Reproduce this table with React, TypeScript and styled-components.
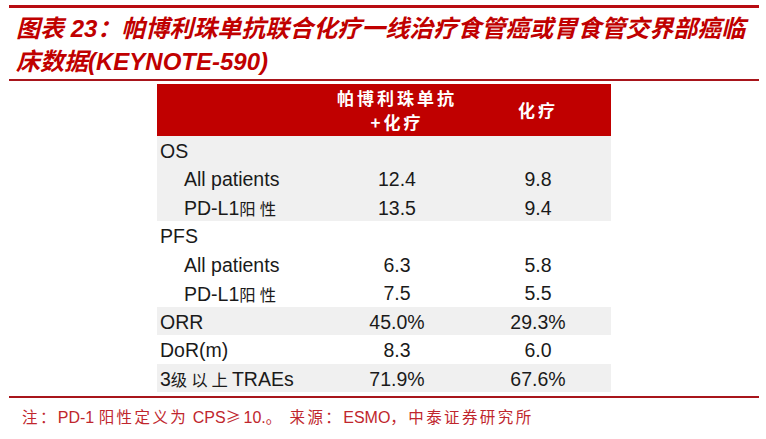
import React from "react";
import styled, { createGlobalStyle } from "styled-components";

const GlobalStyle = createGlobalStyle`
  body {
    margin: 0;
    background: #ffffff;
    font-family: "Liberation Sans", Arial, "Noto Sans CJK SC", sans-serif;
  }
`;

const Han = styled.span`
  font-family: "Noto Sans CJK SC", sans-serif;
  font-size: 0.84em;
  letter-spacing: 4px;
`;

type Row = {
  label: React.ReactNode;
  a: string;
  b: string;
  sub?: boolean;
  shade?: boolean;
};

const rows: Row[] = [
  { label: "OS", a: "", b: "", shade: true },
  { label: "All patients", a: "12.4", b: "9.8", sub: true, shade: true },
  { label: <>PD-L1<Han>阳性</Han></>, a: "13.5", b: "9.4", sub: true, shade: true },
  { label: "PFS", a: "", b: "" },
  { label: "All patients", a: "6.3", b: "5.8", sub: true },
  { label: <>PD-L1<Han>阳性</Han></>, a: "7.5", b: "5.5", sub: true },
  { label: "ORR", a: "45.0%", b: "29.3%", shade: true },
  { label: "DoR(m)", a: "8.3", b: "6.0" },
  { label: <>3<Han>级以上</Han>TRAEs</>, a: "71.9%", b: "67.6%", shade: true },
];

const App = () => {
  return (
    <Page>
      <GlobalStyle />
      <TopBar />
      <Title>
        <TitleLine>
          图表 23：帕博利珠单抗联合化疗一线治疗食管癌或胃食管交界部癌临
        </TitleLine>
        <TitleLine>床数据(KEYNOTE-590)</TitleLine>
      </Title>
      <Divider />
      <Table>
        <HeadRow>
          <HeadCell />
          <HeadCell>
            <span>帕博利珠单抗</span>
            <span>+化疗</span>
          </HeadCell>
          <HeadCell>
            <span>化疗</span>
          </HeadCell>
        </HeadRow>
        {rows.map((r, i) => (
          <BodyRow key={i} $shade={!!r.shade}>
            <Label $sub={!!r.sub}>{r.label}</Label>
            <Value>{r.a}</Value>
            <Value>{r.b}</Value>
          </BodyRow>
        ))}
      </Table>
      <Divider $gap={4} />
      <Note>
        <Han>注：</Han>PD-1 <Han>阳性定义为</Han> CPS<Han>≥</Han>10.<Han>。 来源：</Han>ESMO
        <Han>，中泰证券研究所</Han>
      </Note>
    </Page>
  );
};

export default App;

const Page = styled.div`
  width: 750px;
  padding: 5px 7px 0 9px;
`;

const TopBar = styled.div`
  height: 3px;
  background: #b80c12;
`;

const Title = styled.div`
  padding: 4px 0 0 7px;
  height: 67px;
  color: #c00000;
  font-size: 24px;
  font-weight: bold;
  font-style: italic;
  line-height: 33px;
  font-family: "Liberation Sans", Arial, "Noto Sans CJK SC", sans-serif;
`;

const TitleLine = styled.div`
  white-space: nowrap;
`;

const Divider = styled.div<{ $gap?: number }>`
  height: 1.5px;
  margin-top: ${(p) => p.$gap || 0}px;
  background: #a8151b;
`;

const Table = styled.div`
  margin: 3px 0 0 148px;
  width: 454px;
`;

const HeadRow = styled.div`
  display: grid;
  grid-template-columns: 172px 136px 146px;
  height: 52px;
  background: #c00000;
`;

const HeadCell = styled.div`
  display: flex;
  flex-direction: column;
  align-items: center;
  justify-content: center;
  color: #ffffff;
  font-family: "Noto Sans CJK SC", sans-serif;
  font-weight: bold;
  font-size: 17px;
  letter-spacing: 3px;
  line-height: 24px;
`;

const BodyRow = styled.div<{ $shade: boolean }>`
  display: grid;
  grid-template-columns: 172px 136px 146px;
  box-sizing: border-box;
  height: 28.5px;
  padding-top: 3px;
  align-items: center;
  background: ${(p) => (p.$shade ? "#f0f0f0" : "#ffffff")};
  color: #1a1a1a;
  font-size: 19.5px;
`;

const Label = styled.div<{ $sub: boolean }>`
  padding-left: ${(p) => (p.$sub ? 27 : 3)}px;
  white-space: nowrap;
`;

const Value = styled.div`
  text-align: center;
`;

const Note = styled.div`
  margin-top: 8px;
  padding-left: 13px;
  color: #c0262d;
  font-size: 16px;
  line-height: 20px;
  white-space: nowrap;

  ${Han} {
    font-size: 15.5px;
    letter-spacing: 2.4px;
  }
`;
